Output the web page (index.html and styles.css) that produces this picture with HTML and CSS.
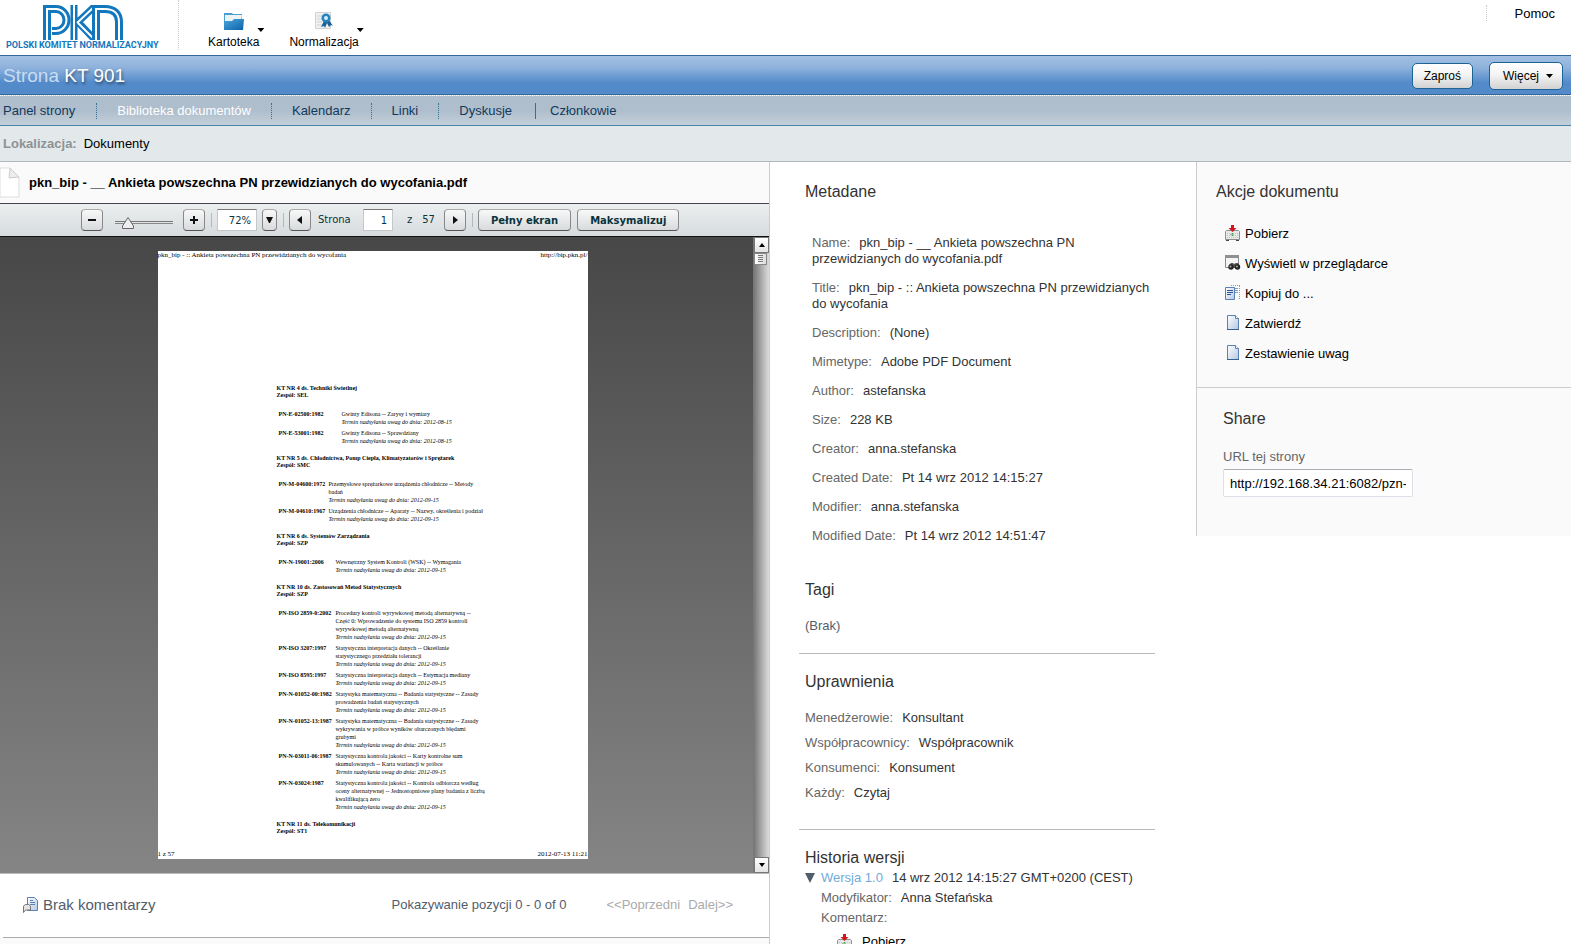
FILE: index.html
```html
<!DOCTYPE html>
<html lang="pl">
<head>
<meta charset="utf-8">
<title>Strona KT 901 - Biblioteka dokumentów</title>
<link rel="stylesheet" href="styles.css">
</head>
<body>
<svg class="defs" width="0" height="0" aria-hidden="true">
  <defs>
    <linearGradient id="sheet" x1="0" y1="0" x2="1" y2="1"><stop offset="0" stop-color="#fff"/><stop offset="1" stop-color="#b4c8e2"/></linearGradient>
    <linearGradient id="folder" x1="0" y1="0" x2="1" y2="1"><stop offset="0" stop-color="#4aa6dc"/><stop offset="1" stop-color="#0d61a8"/></linearGradient>
    <symbol id="i-download" viewBox="0 0 16 16">
      <path d="M.5 6.500l1-1h12l1 1v8H.5z" fill="#e8e8e8" stroke="#8e8e8e"/>
      <path d="M2 8.500h12M2 10.500h12M2 12.500h12" stroke="#c4c4c4" stroke-dasharray="1 1"/>
      <path d="M1 15.500h3M11 15.500h3" stroke="#444"/>
      <path d="M6 0h3v3h2.500L7.500 7 3.500 3H6z" fill="#d2151c"/>
      <path d="M7.500 8v4M5.500 9.500h4" stroke="#35a044" stroke-dasharray="1 1"/>
    </symbol>
    <symbol id="i-browse" viewBox="0 0 16 16">
      <path d="M.5.500h13v12H.5z" fill="#f4f4f4" stroke="#8a8a8a"/>
      <path d="M0 0h14v3H0z" fill="#8f8f8f"/>
      <path d="M4 10l2-2h2l1 1 2-1h2l2 3-4 2H5z" fill="#555"/>
      <circle cx="6" cy="12" r="2.700" fill="#222"/><circle cx="12.500" cy="12" r="2.700" fill="#222"/>
      <circle cx="5.500" cy="11.500" r="1" fill="#aaa"/><circle cx="12" cy="11.500" r="1" fill="#aaa"/>
    </symbol>
    <symbol id="i-copy" viewBox="0 0 16 16">
      <path d="M6 .5h9M14.500 1v13" fill="none" stroke="#7d9cc8" stroke-dasharray="1 1"/>
      <path d="M10 3.500h3M10 5.500h3M10 7.500h3" stroke="#7d9cc8"/>
      <path d="M.5 2.500h9v12h-9z" fill="url(#sheet)" stroke="#5b80b4"/>
      <path d="M2 5.500h6M2 7.500h6M2 9.500h4" stroke="#2c5594"/>
    </symbol>
    <symbol id="i-sheet" viewBox="0 0 16 16">
      <path d="M2.500.5h8l3 3v11h-11z" fill="url(#sheet)" stroke="#5b80b4"/>
      <path d="M10.500.5v3h3" fill="#fff" stroke="#5b80b4"/>
      <path d="M2 14.500h12" stroke="#35608f"/>
    </symbol>
  </defs>
</svg>

<div class="app">
  <header class="top">
    <a class="logo" href="#">
      <svg width="80" height="35" viewBox="0 0 80 35" fill="none" aria-hidden="true">
        <path d="M4 35V4h9a10.500 11 0 0 1 0 22H9" stroke="#1277bd" stroke-width="8"/>
        <path d="M4 35V4h9a10.500 11 0 0 1 0 22H8" stroke="#fff" stroke-width="2"/>
        <path d="M31 0v35M35 17L52 1M35 17l16 17" stroke="#1277bd" stroke-width="7"/>
        <path d="M31 0v35M34 18L53 0M35 18l17 17" stroke="#fff" stroke-width="2"/>
        <path d="M53 35V4h9c9 0 14 5 14 13v18" stroke="#1277bd" stroke-width="8"/>
        <path d="M53 35V4h9c9 0 14 5 14 13v18" stroke="#fff" stroke-width="2"/>
      </svg>
      <span>POLSKI KOMITET NORMALIZACYJNY</span>
    </a>
    <nav class="apps">
      <a class="app-link" href="#">
        <svg class="app-icon" width="22" height="19" viewBox="0 0 22 19" aria-hidden="true">
          <path d="M1 1h8l1 1h9v9H1z" fill="#4a9ed2"/><path d="M2 3h17l-1 6H2z" fill="#eef3f6"/>
          <path d="M1 18V9h8l2-2h10l-1 11z" fill="url(#folder)"/>
        </svg>
        <span>Kartoteka</span><i class="caret"></i>
      </a>
      <a class="app-link" href="#">
        <svg class="app-icon" width="22" height="19" viewBox="0 0 22 19" aria-hidden="true">
          <path d="M2.500.5h15v16h-15z" fill="#f0f0f0" stroke="#d2d2d2"/>
          <path d="M4 4h6M4 7h5M4 10h5M4 13h8" stroke="#cfd4d8"/>
          <path d="M11 9l-3 6 3-1 1 2 2-5 2 4 2-2 2 1-4-6z" fill="#1c5f94"/>
          <circle cx="13" cy="6" r="4.500" fill="#2383bf"/><circle cx="13" cy="6" r="2" fill="#d8edf8"/>
        </svg>
        <span>Normalizacja</span><i class="caret"></i>
      </a>
    </nav>
    <a class="help" href="#">Pomoc</a>
  </header>

  <div class="titlebar">
    <h1><span>Strona</span> KT 901</h1>
    <button class="btn" type="button">Zaproś</button>
    <button class="btn btn-menu" type="button">Więcej <i class="caret"></i></button>
  </div>

  <nav class="tabs">
    <a href="#">Panel strony</a>
    <a class="active" href="#">Biblioteka dokumentów</a>
    <a href="#">Kalendarz</a>
    <a href="#">Linki</a>
    <a href="#">Dyskusje</a>
    <a class="members" href="#">Członkowie</a>
  </nav>

  <div class="crumbs"><b>Lokalizacja:</b><a href="#">Dokumenty</a></div>

  <main class="columns">
    <section class="preview">
      <div class="doc-title">
        <svg width="21" height="32" viewBox="0 0 21 32" aria-hidden="true">
          <path d="M0 1h10l9 9v20H0z" fill="#fff" stroke="#ddd"/>
          <path d="M10 1l-1 10 10-1z" fill="#ececec" stroke="#ccc"/>
        </svg>
        <h2>pkn_bip - __ Ankieta powszechna PN przewidzianych do wycofania.pdf</h2>
      </div>
      <div class="toolbar">
        <button class="tool" type="button" aria-label="Pomniejsz"><svg width="10" height="10"><path d="M1 5h8" stroke="#111" stroke-width="2"/></svg></button>
        <input class="zoom" type="range" min="0" max="100" value="15" aria-label="Powiększenie">
        <button class="tool" type="button" aria-label="Powiększ"><svg width="10" height="10"><path d="M1 5h8M5 1v8" stroke="#111" stroke-width="2"/></svg></button>
        <i class="sep"></i>
        <input class="field" type="text" value="72%" aria-label="Skala">
        <button class="tool narrow" type="button" aria-label="Wybierz skalę"><svg width="7" height="6"><path d="M0 0h7L4 6H3z" fill="#111"/></svg></button>
        <i class="sep"></i>
        <button class="tool" type="button" aria-label="Poprzednia"><svg width="6" height="8"><path d="M5 0v8L0 4z" fill="#111"/></svg></button>
        <label class="page-label" for="page">Strona</label>
        <input class="field short" id="page" type="text" value="1">
        <span class="of">z</span><span class="total">57</span>
        <button class="tool" type="button" aria-label="Następna"><svg width="6" height="8"><path d="M1 0v8l5-4z" fill="#111"/></svg></button>
        <i class="sep"></i>
        <button class="tool wide" type="button">Pełny ekran</button>
        <button class="tool wide" type="button">Maksymalizuj</button>
      </div>
      <div class="viewer">
        <div class="stage">
          <article class="sheet">
            <div class="running"><span>pkn_bip - :: Ankieta powszechna PN przewidzianych do wycofania</span><span>http://bip.pkn.pl/</span></div>
            <div class="sheet-body">
              <section class="group g1">
                <h3>KT NR 4 ds. Techniki Świetlnej<br>Zespół: SEL</h3>
                <dl><dt>PN-E-02500:1982</dt><dd>Gwinty Edisona -- Zarysy i wymiary<br><em>Termin nadsyłania uwag do dnia: 2012-08-15</em></dd>
                <dt>PN-E-53001:1982</dt><dd>Gwinty Edisona -- Sprawdziany<br><em>Termin nadsyłania uwag do dnia: 2012-08-15</em></dd></dl>
              </section>
              <section class="group g2">
                <h3>KT NR 5 ds. Chłodnictwa, Pomp Ciepła, Klimatyzatorów i Sprężarek<br>Zespół: SMC</h3>
                <dl><dt>PN-M-04600:1972</dt><dd>Przemysłowe sprężarkowe urządzenia chłodnicze -- Metody<br>badań<br><em>Termin nadsyłania uwag do dnia: 2012-09-15</em></dd>
                <dt>PN-M-04610:1967</dt><dd>Urządzenia chłodnicze -- Aparaty -- Nazwy, określenia i podział<br><em>Termin nadsyłania uwag do dnia: 2012-09-15</em></dd></dl>
              </section>
              <section class="group g3">
                <h3>KT NR 6 ds. Systemów Zarządzania<br>Zespół: SZP</h3>
                <dl><dt>PN-N-19001:2006</dt><dd>Wewnętrzny System Kontroli (WSK) -- Wymagania<br><em>Termin nadsyłania uwag do dnia: 2012-09-15</em></dd></dl>
              </section>
              <section class="group g3">
                <h3>KT NR 10 ds. Zastosowań Metod Statystycznych<br>Zespół: SZP</h3>
                <dl><dt>PN-ISO 2859-0:2002</dt><dd>Procedury kontroli wyrywkowej metodą alternatywną --<br>Część 0: Wprowadzenie do systemu ISO 2859 kontroli<br>wyrywkowej metodą alternatywną<br><em>Termin nadsyłania uwag do dnia: 2012-09-15</em></dd>
                <dt>PN-ISO 3207:1997</dt><dd>Statystyczna interpretacja danych -- Określanie<br>statystycznego przedziału tolerancji<br><em>Termin nadsyłania uwag do dnia: 2012-09-15</em></dd>
                <dt>PN-ISO 8595:1997</dt><dd>Statystyczna interpretacja danych -- Estymacja mediany<br><em>Termin nadsyłania uwag do dnia: 2012-09-15</em></dd>
                <dt>PN-N-01052-00:1982</dt><dd>Statystyka matematyczna -- Badania statystyczne -- Zasady<br>prowadzenia badań statystycznych<br><em>Termin nadsyłania uwag do dnia: 2012-09-15</em></dd>
                <dt>PN-N-01052-13:1987</dt><dd>Statystyka matematyczna -- Badania statystyczne -- Zasady<br>wykrywania w próbce wyników obarczonych błędami<br>grubymi<br><em>Termin nadsyłania uwag do dnia: 2012-09-15</em></dd>
                <dt>PN-N-03011-06:1987</dt><dd>Statystyczna kontrola jakości -- Karty kontrolne sum<br>skumulowanych -- Karta wariancji w próbce<br><em>Termin nadsyłania uwag do dnia: 2012-09-15</em></dd>
                <dt>PN-N-03024:1987</dt><dd>Statystyczna kontrola jakości -- Kontrola odbiorcza według<br>oceny alternatywnej -- Jednostopniowe plany badania z liczbą<br>kwalifikującą zero<br><em>Termin nadsyłania uwag do dnia: 2012-09-15</em></dd></dl>
              </section>
              <section class="group">
                <h3>KT NR 11 ds. Telekomunikacji<br>Zespół: ST1</h3>
              </section>
            </div>
            <div class="running"><span>1 z 57</span><span>2012-07-13 11:21</span></div>
          </article>
        </div>
        <div class="scroll">
          <button type="button" aria-label="W górę"><svg width="6" height="4"><path d="M0 4h6L3 0z"/></svg></button>
          <div class="thumb"><svg width="5" height="8"><path d="M0 .5h5M0 2.500h5M0 4.500h5M0 6.500h5" stroke="#777"/></svg></div>
          <button class="down" type="button" aria-label="W dół"><svg width="6" height="4"><path d="M0 0h6L3 4z"/></svg></button>
        </div>
      </div>
      <div class="comments">
        <svg width="16" height="16" viewBox="0 0 16 16" aria-hidden="true">
          <path d="M4.500.5h7l3 3v10h-10z" fill="url(#sheet)" stroke="#5b80b4"/>
          <path d="M7 3.500h3M7 5.500h5M7 7.500h5" stroke="#5b80b4"/>
          <path d="M.5 15.500V9l2-1.500h3L7.500 9v4h-5z" fill="#e4e4e4" stroke="#777"/>
        </svg>
        <span class="none">Brak komentarzy</span>
        <span class="count">Pokazywanie pozycji 0 - 0 of 0</span>
        <span class="pager"><span>&lt;&lt;Poprzedni</span><span>Dalej&gt;&gt;</span></span>
      </div>
      <div class="below"></div>
    </section>

    <section class="details">
      <h2>Metadane</h2>
      <div class="meta">
        <p><span>Name:</span>pkn_bip - __ Ankieta powszechna PN przewidzianych do wycofania.pdf</p>
        <p><span>Title:</span>pkn_bip - :: Ankieta powszechna PN przewidzianych do wycofania</p>
        <p><span>Description:</span>(None)</p>
        <p><span>Mimetype:</span>Adobe PDF Document</p>
        <p><span>Author:</span>astefanska</p>
        <p><span>Size:</span>228 KB</p>
        <p><span>Creator:</span>anna.stefanska</p>
        <p><span>Created Date:</span>Pt 14 wrz 2012 14:15:27</p>
        <p><span>Modifier:</span>anna.stefanska</p>
        <p><span>Modified Date:</span>Pt 14 wrz 2012 14:51:47</p>
      </div>
      <h2>Tagi</h2>
      <p class="tags">(Brak)</p>
      <hr>
      <h2>Uprawnienia</h2>
      <div class="perms">
        <p><span>Menedżerowie:</span>Konsultant</p>
        <p><span>Współpracownicy:</span>Współpracownik</p>
        <p><span>Konsumenci:</span>Konsument</p>
        <p><span>Każdy:</span>Czytaj</p>
      </div>
      <hr>
      <h2>Historia wersji</h2>
      <div class="version">
        <p class="version-head"><svg width="10" height="10" aria-hidden="true"><path d="M0 0h10L5 10z" fill="#515d6b"/></svg><a href="#">Wersja 1.0</a>14 wrz 2012 14:15:27 GMT+0200 (CEST)</p>
        <p><span>Modyfikator:</span>Anna Stefańska</p>
        <p><span>Komentarz:</span></p>
        <a class="get" href="#"><svg width="16" height="16"><use href="#i-download"/></svg>Pobierz</a>
      </div>
    </section>

    <aside class="side">
      <section class="actions">
        <h2>Akcje dokumentu</h2>
        <a href="#"><svg width="16" height="16"><use href="#i-download"/></svg>Pobierz</a>
        <a href="#"><svg width="16" height="16"><use href="#i-browse"/></svg>Wyświetl w przeglądarce</a>
        <a href="#"><svg width="16" height="16"><use href="#i-copy"/></svg>Kopiuj do ...</a>
        <a href="#"><svg width="16" height="16"><use href="#i-sheet"/></svg>Zatwierdź</a>
        <a href="#"><svg width="16" height="16"><use href="#i-sheet"/></svg>Zestawienie uwag</a>
      </section>
      <section class="share">
        <h2>Share</h2>
        <label for="url">URL tej strony</label>
        <input id="url" type="text" value="http://192.168.34.21:6082/pzn-">
      </section>
    </aside>
  </main>
</div>
</body>
</html>
```

FILE: styles.css
```css
* { box-sizing: border-box; }
body { margin: 0; background: #fff; color: #333; font: 13px/16px "Liberation Sans", Arial, sans-serif; }
h1, h2, h3, p, dl, dd { margin: 0; font-weight: normal; }
a { color: inherit; text-decoration: none; }
svg { display: block; flex: none; }
button, input { font-family: inherit; margin: 0; }
.defs { position: absolute; }
.app { display: flex; flex-direction: column; height: 100vh; overflow: hidden; }

.caret { display: block; width: 7px; height: 4px; background: #000; clip-path: polygon(0 0, 100% 0, 50% 100%); }

/* Header */
.top { flex: none; display: flex; align-items: flex-start; height: 55px; color: #000; }
.logo { width: 179px; height: 50px; padding: 5px 0 0 6px; border-right: 1px dotted #ccc; color: #1277bd; font: bold 9px/10px Roboto, "Liberation Sans", sans-serif; white-space: nowrap; }
.logo svg { margin-left: 37px; }
.logo span { display: block; }
.apps { display: flex; gap: 30px; padding: 12px 0 0 29px; font-size: 12px; }
.app-link { position: relative; display: flex; flex-direction: column; align-items: center; gap: 4px; line-height: 14px; }
.app-link .caret { position: absolute; top: 16px; right: -5px; }
.help { margin: 5px 16px 0 auto; padding: 1px 0 0 28px; border-left: 1px dotted #ccc; line-height: 15px; }

/* Site title bar */
.titlebar { flex: none; display: flex; align-items: center; height: 40px; padding: 2px 8px 0 3px; border-top: 1px solid #336699; border-bottom: 1px solid #336699; background: linear-gradient(#a3c0e2, #8fb2dc 30%, #538bca 70%, #538bca); }
.titlebar h1 { margin-right: auto; color: #fff; font-size: 19px; line-height: 24px; text-shadow: 1px 2px 3px rgba(0, 0, 0, .5); }
.titlebar h1 span { color: #c8dcf0; text-shadow: none; }
.btn { height: 26px; padding: 0 11px; border: 1px solid #1c6494; border-radius: 5px; background: linear-gradient(#fff, #f4f4f4 45%, #d2d2d4); color: #000; font-size: 12px; }
.btn-menu { display: flex; align-items: center; gap: 7px; height: 28px; margin-left: 16px; padding: 0 9px 0 13px; }

/* Tabs */
.tabs { flex: none; display: flex; align-items: center; height: 31px; border-top: 1px dotted #fff; border-bottom: 1px solid #4a83a8; background: linear-gradient(#afbecd 50%, #c3d0d9); color: #11395c; }
.tabs a { padding: 0 20px; border-right: 1px dotted #2f7299; }
.tabs a:first-child { padding: 0 21px 0 3px; }
.tabs a.active { color: #fff; }
.tabs a:nth-last-child(2) { padding-right: 23px; border-right: 1px solid #2f7299; }
.tabs a.members { padding-left: 14px; border-right: 0; }

.crumbs { flex: none; display: flex; gap: 7px; height: 36px; padding: 10px 3px; border-bottom: 1px solid #b2b8b9; background: #e3e8eb; }
.crumbs b { color: #8d9393; }
.crumbs a { color: #000; }

/* Columns */
.columns { flex: 1; min-height: 0; display: grid; grid-template-columns: 770fr 426fr 375fr; align-items: start; }
.preview { display: flex; flex-direction: column; height: 100%; border-right: 1px solid #ccc; }
.doc-title { flex: none; display: flex; align-items: center; gap: 8px; height: 42px; padding-top: 1px; border-bottom: 1px solid #445; background: #fafafa; color: #000; }
.doc-title h2 { font-size: 13px; font-weight: bold; }

.toolbar { flex: none; display: flex; align-items: center; height: 33px; padding-left: 81px; border-bottom: 1px solid #111; background: linear-gradient(#eceff0, #d6dbdd); color: #0b333c; font: 10px/12px "DejaVu Sans", Verdana, sans-serif; }
.tool { display: flex; align-items: center; justify-content: center; width: 22px; height: 22px; padding: 0; border: 1px solid #888; border-top-color: #aaa; border-bottom-color: #555; border-radius: 4px; background: linear-gradient(#f8f8f8, #d8dadc); }
.tool.narrow { width: 15px; margin-left: 5px; }
.tool.wide { width: auto; padding: 0 12px; color: #0b333c; font-size: 10px; font-weight: bold; }
.tool.wide + .wide { margin-left: 6px; }
.sep { width: 1px; height: 14px; margin: 0 5px 0 6px; background: #b4b8ba; }
.field { width: 40px; height: 22px; padding: 0 5px; border: 1px solid #c4c8ca; border-top-color: #777; background: #fff; color: #0b333c; font-size: 10px; text-align: right; }
.field.short { width: 30px; }
.page-label { width: 45px; margin-left: 7px; }
.of { margin: 0 10px 0 14px; }
.total { margin-right: 9px; }
.zoom { width: 58px; height: 14px; margin: 6px 10px 0 12px; appearance: none; background: linear-gradient(#777, #777) 0 5px / 100% 1px no-repeat, linear-gradient(#888, #888) 0 7px / 100% 1px no-repeat; }
.zoom::-webkit-slider-thumb { appearance: none; width: 12px; height: 12px; background: url("data:image/svg+xml,%3Csvg xmlns='http://www.w3.org/2000/svg' width='12' height='12'%3E%3Cpath d='M6 .5 11.5 9v2.500H.5V9z' fill='%23eee' stroke='%23666'/%3E%3C/svg%3E"); }

.viewer { flex: none; display: flex; border-bottom: 1px solid #bbb; background: linear-gradient(#474747, #858585); }
.stage { flex: 1; display: flex; justify-content: center; padding: 14px 8px 14px 0; }
.sheet { display: flex; flex-direction: column; width: 430px; height: 608px; background: #fff; color: #000; font: 6px/8px "Liberation Serif", "Times New Roman", serif; white-space: nowrap; }
.running { flex: none; display: flex; justify-content: space-between; font-size: 7px; line-height: 9px; }
.sheet-body { flex: 1; min-height: 0; margin-bottom: 16px; padding: 125px 0 0 119px; overflow: hidden; }
.group { margin-bottom: 10px; }
.group h3 { margin-bottom: 11px; font-size: 6px; font-weight: bold; line-height: 7px; }
.group dl { display: grid; row-gap: 3px; padding-left: 2px; }
.g1 dl { grid-template-columns: 63px 1fr; }
.g2 dl { grid-template-columns: 50px 1fr; }
.g3 dl { grid-template-columns: 57px 1fr; }
.group dt { font-weight: bold; }

.scroll { display: flex; flex-direction: column; width: 16px; border-left: 1px solid #777; background: linear-gradient(90deg, #777, #ddd); }
.scroll button { display: flex; align-items: center; justify-content: center; height: 16px; padding: 0; border: 1px solid #777; background: linear-gradient(#fff, #e4e4e4); }
.scroll .down { margin-top: auto; }
.thumb { display: flex; align-items: center; justify-content: center; height: 12px; margin-right: 2px; border: 1px solid #888; background: linear-gradient(90deg, #fff, #ddd); }

.comments { flex: none; display: flex; align-items: center; height: 64px; margin-left: 3px; padding: 0 36px 2px 20px; border-bottom: 1px solid #aaa; color: #515d6b; }
.comments .none { margin-left: 4px; font-size: 15px; }
.comments .count { margin-left: auto; }
.pager { display: flex; gap: 8px; margin-left: 40px; color: #aaa; }
.below { flex: 1; background: #fafafa; }

/* Details */
.details { padding: 20px 41px 0 29px; }
.details h2, .side h2 { font-size: 16px; line-height: 20px; }
.details h2 { margin-left: 6px; }
.details p span { color: #666; margin-right: 9px; }
.meta { display: grid; gap: 13px; margin: 33px 0 36px 13px; }
.details .tags { margin: 18px 6px 19px; color: #515d6b; }
.details hr { height: 1px; margin: 0 0 18px; border: 0; background: #bbb; }
.perms { display: grid; gap: 9px; margin: 18px 6px 28px; }
.version { margin-left: 22px; line-height: 20px; }
.version-head { display: flex; align-items: center; margin-left: -16px; }
.version-head a { margin: 0 9px 0 6px; color: #72aad8; }
.version .get { display: flex; align-items: center; gap: 9px; margin: 4px 0 0 16px; color: #000; }

/* Side panel */
.side { border-left: 1px solid #ccc; background: #fafafa; }
.actions { padding: 20px 19px 18px; border-bottom: 1px solid #ccc; }
.actions h2 { margin-bottom: 17px; }
.actions a { display: flex; align-items: center; gap: 4px; height: 30px; padding-left: 9px; color: #000; }
.actions svg { margin-bottom: 2px; }
.share { height: 148px; padding: 21px 26px; }
.share label { display: block; margin: 20px 0 4px; color: #666; }
.share input { width: 190px; height: 28px; padding: 0 6px; border: 1px solid #dde0e6; border-top-color: #aaadb3; border-radius: 2px; background: #fff; color: #000; font-size: 13px; }
```
